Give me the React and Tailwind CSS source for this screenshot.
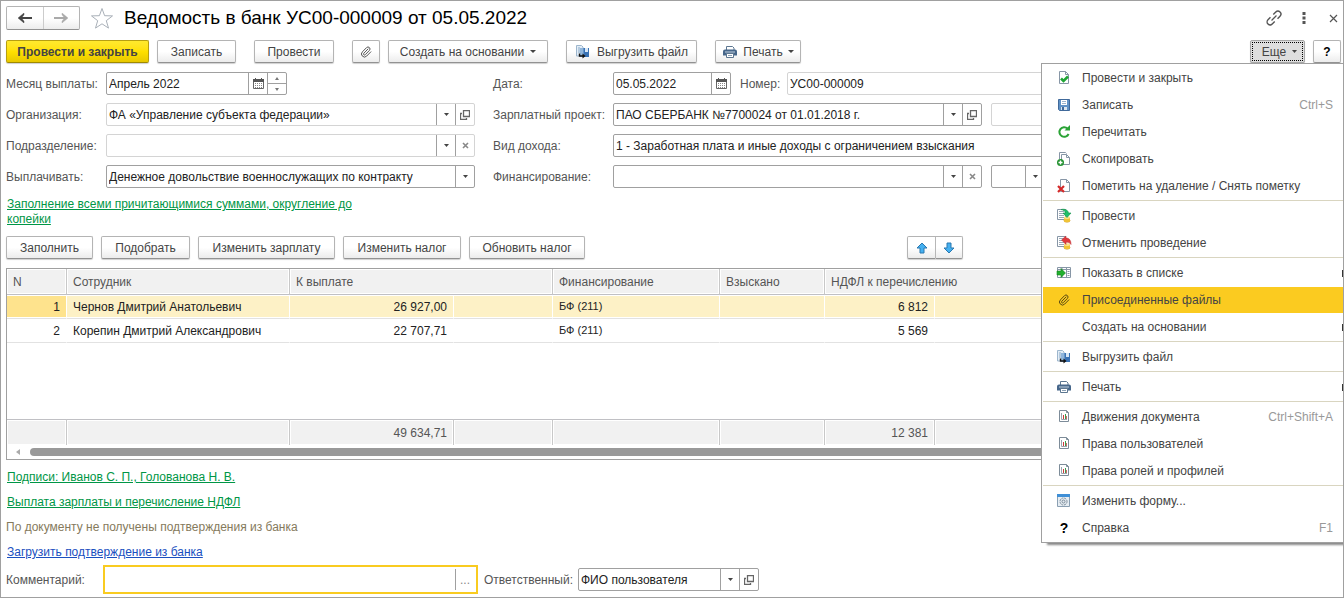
import React from "react";
import { Paperclip } from "lucide-react";

/* ---------- icons ---------- */

const Svg = ({ children, w = 16, h = 16, className = "" }) => (
  <svg width={w} height={h} viewBox={`0 0 ${w} ${h}`} fill="none" aria-hidden="true" className={`shrink-0 ${className}`}>
    {children}
  </svg>
);

const ArrowIcon = ({ right, color }) => (
  <Svg w={14} h={10}>
    <g transform={right ? "rotate(180 7 5)" : undefined}>
      <path d="M14 5H2" stroke={color} strokeWidth="2" />
      <path d="M6 0v1.800L3.500 5 6 8.200V10L0 5z" fill={color} stroke={color} strokeWidth=".4" />
    </g>
  </Svg>
);

const StarIcon = () => (
  <Svg w={24} h={22}>
    <path
      d="M12 1.500l2.600 7.200 7.900.2-6.200 4.800 2.200 7.400L12 16.800l-6.500 4.300 2.200-7.400L1.500 8.900l7.900-.2z"
      stroke="#a9b0b8"
      strokeWidth="1"
      strokeLinejoin="round"
    />
  </Svg>
);

const ClipIcon = ({ color = "#555" }) => (
  <span className="flex w-4 shrink-0 justify-center">
    <Paperclip size={12} color={color} strokeWidth={2} aria-hidden="true" />
  </span>
);

const Caret = ({ color = "#444" }) => (
  <Svg w={5} h={3}>
    <path d="M0 0h5L2.500 3z" fill={color} />
  </Svg>
);

const WideCaret = () => (
  <Svg w={6} h={3}>
    <path d="M0 0h6L3 3z" fill="#444" />
  </Svg>
);

const ExportIcon = () => (
  <Svg>
    <path d="M1.500 1.500h5l1.500 1.500v9h-6.500z" fill="#e3edf6" stroke="#9db6cd" />
    <path d="M3 4h2M3 6h2M3 8h2" stroke="#86a8c8" />
    <path d="M5 4h9v9H5z" fill="#3a72b4" />
    <path d="M5 4h3.500v9H5z" fill="#8fb5db" />
    <path d="M10 4h3v4h-3z" fill="#d9e8f6" />
    <path d="M4.500 9.500v2.500h4" stroke="#111" strokeWidth="1.400" />
    <path d="M7.500 9.500l3 2.500-3 2.500z" fill="#111" />
  </Svg>
);

const PrinterIcon = () => (
  <Svg>
    <path d="M4.500 6V2.500h6l1.500 1.500v2" fill="#fff" stroke="#5c7690" />
    <path d="M3 5.500h10a2 2 0 0 1 2 2v4H1v-4a2 2 0 0 1 2-2z" fill="#46668a" />
    <path d="M3 8h10" stroke="#c3d2e0" />
    <path d="M4.500 9.500h7v4h-7z" fill="#fff" stroke="#5c7690" />
    <path d="M6 11.500h4" stroke="#8ba0b5" />
  </Svg>
);

const CalendarIcon = () => (
  <Svg w={11} h={11}>
    <path d="M.5 1.500h10v9H.5z" fill="#fff" stroke="#666" />
    <path d="M0 1h11v3H0z" fill="#555" />
    <path d="M2.500 0v2M8.500 0v2" stroke="#555" />
    <path d="M2 5.500h7M2 7.500h7M2 9.500h7" stroke="#888" strokeDasharray="1 1" />
  </Svg>
);

const OpenIcon = () => (
  <Svg w={10} h={10}>
    <path d="M3.500.5h6v6h-6z" stroke="#666" strokeWidth="1.300" />
    <path d="M2 3.500H.5v6h6V8" stroke="#666" strokeWidth="1.300" />
  </Svg>
);

const ClearIcon = () => (
  <Svg w={7} h={7}>
    <path d="M1 1l5 5M6 1L1 6" stroke="#888" strokeWidth="1.600" />
  </Svg>
);

const MoveIcon = ({ down }) => (
  <Svg w={12} h={12}>
    <path
      d="M6 1l5 5H8v5H4V6H1z"
      transform={down ? "rotate(180 6 6)" : undefined}
      fill="#45b0f0"
      stroke="#2a78b0"
      strokeLinejoin="round"
    />
  </Svg>
);

const PostCloseIcon = () => (
  <Svg>
    <path d="M3.500 1.500h6l3 3v9h-9z" fill="#fff" stroke="#8796a6" />
    <path d="M9.500 1.500v3h3" stroke="#8796a6" />
    <path d="M5 8.500l2.500 2.500L12 6.500" stroke="#1fa534" strokeWidth="2.600" />
  </Svg>
);

const SaveIcon = () => (
  <Svg>
    <path d="M2.500 2.500h11v11h-10l-1-1z" fill="#5f92c6" stroke="#40699a" />
    <path d="M5 3h6v5H5z" fill="#fff" />
    <path d="M6 4.500h4M6 6.500h4" stroke="#9bb4cd" />
    <path d="M5 10h6v3H5z" fill="#dbe6f0" />
    <path d="M6 10h2v3H6z" fill="#40699a" />
  </Svg>
);

const ReloadIcon = () => (
  <Svg>
    <path d="M11.500 4.500A4.800 4.800 0 1 0 12.600 10" stroke="#2ba336" strokeWidth="2" />
    <path d="M8.500 6.500H14V1z" fill="#2ba336" />
  </Svg>
);

const CopyIcon = () => (
  <Svg>
    <path d="M3.500 8V1.500h6l1 1" fill="#fff" stroke="#8796a6" />
    <path d="M5.500 3.500h5l3 3v7h-8z" fill="#fff" stroke="#8796a6" />
    <path d="M10.500 3.500v3h3" stroke="#8796a6" />
    <circle cx="4.500" cy="11.500" r="3.500" fill="#22912f" />
    <path d="M4.500 9.500v4M2.500 11.500h4" stroke="#fff" strokeWidth="1.400" />
  </Svg>
);

const DeleteMarkIcon = () => (
  <Svg>
    <path d="M4.500 1.500h6l3 3v9h-9z" fill="#fff" stroke="#8796a6" />
    <path d="M10.500 1.500v3h3" stroke="#8796a6" />
    <path d="M2 8l6 6M8 8l-6 6" stroke="#d42a2a" strokeWidth="2.200" />
  </Svg>
);

const PostIcon = ({ undo }) => (
  <Svg>
    <path d="M1.500 1.500h8v10h-8z" fill="#fff" stroke="#8796a6" />
    <path d="M3 3.500h5M3 5.500h5M3 7.500h5M3 9.500h5" stroke="#9aa8b6" />
    <ellipse cx="11" cy="12.500" rx="3" ry="1.700" fill="#f0c437" stroke="#c9951b" strokeWidth=".6" />
    <path d="M8 9.500v3a3 1.500 0 0 0 6 0v-3z" fill="#f0c437" />
    <ellipse cx="11" cy="9.700" rx="3" ry="1.400" fill="#fbe28b" />
    {undo ? (
      <path d="M5.500 5L10 1v2c3 0 5 2 5 6.500-1.200-2-2.500-2.200-5-2.200V9.500z" fill="#e0393c" stroke="#b8282b" strokeWidth=".5" />
    ) : (
      <path d="M5 1.500c4-.8 7 .3 7.500 3.500H15l-4 4.500L7 5h2.500C9.300 3.200 7.500 2 5 1.500z" fill="#1fc069" stroke="#15904c" strokeWidth=".6" />
    )}
  </Svg>
);

const ShowInListIcon = () => (
  <Svg>
    <path d="M1.500 2.500h13v10h-13z" fill="#fff" stroke="#8796a6" />
    <path d="M2 4.500h12M6 3v9.500M10.500 3v9.500M11.500 6.500h2M11.500 8.500h2M11.500 10.500h2" stroke="#8796a6" />
    <path d="M1 6h4V3.500L9.500 8 5 12.500V10H1z" fill="#20b02c" stroke="#15801e" strokeWidth=".6" />
  </Svg>
);

const ReportIcon = () => (
  <Svg>
    <path d="M3.500 1.500h7l2 2v9h-9z" fill="#fff" stroke="#7d8c99" />
    <path d="M10.500 1.500v2h2" stroke="#7d8c99" />
    <path d="M5.500 4v6.500H11" stroke="#9aa5af" />
    <path d="M7.500 6v4" stroke="#cc3b3b" />
    <path d="M9.500 5v5" stroke="#3f9a4c" />
    <path d="M10.500 7v3" stroke="#cc6a6a" />
  </Svg>
);

const FormIcon = () => (
  <Svg>
    <path d="M1.500 1.500h12v12h-12z" fill="#e6edf3" stroke="#8a9fb2" />
    <path d="M1 1h13v3H1z" fill="#3f8fd6" />
    <circle cx="7.500" cy="8.500" r="3.500" stroke="#7b8b99" strokeDasharray="2 .8" />
    <circle cx="7.500" cy="8.500" r="1.500" stroke="#7b8b99" />
  </Svg>
);

const HelpIcon = () => <span className="w-4 text-center text-sm font-bold text-black">?</span>;

const LinkIcon = () => (
  <Svg w={18} h={18}>
    <g transform="rotate(-45 9 9)" stroke="#555" strokeWidth="1.400">
      <path d="M7 6H3.500a3 3 0 0 0 0 6H7" />
      <path d="M11 6h3.500a3 3 0 0 1 0 6H11" />
      <path d="M5.500 9h7" strokeWidth="1.200" />
    </g>
  </Svg>
);

/* ---------- controls ---------- */

const tones = {
  plain: "border-[#b4b4b4] border-b-[#929292] bg-linear-to-b from-white from-50% to-[#ececec] text-[#444]",
  primary: "border-[#b79f10] border-b-[#a08a00] bg-linear-to-b from-[#ffe92e] via-[#ffe000] to-[#e8c800] font-bold text-[#444]",
  pressed: "border-[#a8a8a8] bg-[#dedede] p-px text-[#444]",
};

const Btn = ({ children, tone = "plain", className = "", ...rest }) => (
  <button
    type="button"
    className={`flex h-[23px] shrink-0 items-center justify-center rounded-xs border text-xs whitespace-nowrap shadow-[0_1px_1px_#d0d0d0] ${tones[tone]} ${className}`}
    {...rest}
  >
    {children}
  </button>
);

const Seg = ({ label, children }) => (
  <button type="button" aria-label={label} className="flex w-[19px] shrink-0 items-center justify-center border-l border-[#a0a0a0]">
    {children}
  </button>
);

const Box = ({ children, light, className = "" }) => (
  <div className={`flex h-[23px] min-w-0 rounded-xs border bg-white ${light ? "border-[#d4d4d4]" : "border-[#a0a0a0]"} ${className}`}>
    {children}
  </div>
);

const TextBox = (props) => (
  <input type="text" className="w-0 min-w-0 flex-1 bg-transparent px-0.5 text-xs text-[#222] outline-none" {...props} />
);

const Dropdown = () => (
  <Seg label="Выбрать">
    <Caret />
  </Seg>
);
const Open = () => (
  <Seg label="Открыть">
    <OpenIcon />
  </Seg>
);
const Clear = () => (
  <Seg label="Очистить">
    <ClearIcon />
  </Seg>
);
const Calendar = () => (
  <Seg label="Календарь">
    <CalendarIcon />
  </Seg>
);

const LeftRow = ({ id, label, children }) => (
  <div className="flex h-[23px] items-center">
    <label htmlFor={id} className="w-[100px] shrink-0 whitespace-nowrap">{label}</label>
    {children}
  </div>
);
const RightRow = ({ id, label, children }) => (
  <div className="flex h-[23px] items-center">
    <label htmlFor={id} className="w-[120px] shrink-0 whitespace-nowrap">{label}</label>
    {children}
  </div>
);

/* ---------- menu ---------- */

const menu = [
  [
    { icon: <PostCloseIcon />, text: "Провести и закрыть" },
    { icon: <SaveIcon />, text: "Записать", key: "Ctrl+S" },
    { icon: <ReloadIcon />, text: "Перечитать" },
    { icon: <CopyIcon />, text: "Скопировать" },
    { icon: <DeleteMarkIcon />, text: "Пометить на удаление / Снять пометку" },
  ],
  [
    { icon: <PostIcon />, text: "Провести" },
    { icon: <PostIcon undo />, text: "Отменить проведение" },
  ],
  [
    { icon: <ShowInListIcon />, text: "Показать в списке", sub: true },
    { icon: <ClipIcon color="#5a4a14" />, text: "Присоединенные файлы", active: true },
    { text: "Создать на основании", sub: true },
  ],
  [{ icon: <ExportIcon />, text: "Выгрузить файл" }],
  [{ icon: <PrinterIcon />, text: "Печать", sub: true }],
  [
    { icon: <ReportIcon />, text: "Движения документа", key: "Ctrl+Shift+A" },
    { icon: <ReportIcon />, text: "Права пользователей" },
    { icon: <ReportIcon />, text: "Права ролей и профилей" },
  ],
  [
    { icon: <FormIcon />, text: "Изменить форму..." },
    { icon: <HelpIcon />, text: "Справка", key: "F1" },
  ],
];

const MoreMenu = () => (
  <div
    role="menu"
    aria-label="Еще"
    className="absolute top-full right-0 z-10 w-[302px] border border-r-0 border-[#a0a0a0] bg-white pt-px pl-px shadow-[5px_3px_2px_-1px_#888]"
  >
    {menu.map((group, i) => (
      <div key={i} className={i ? "border-t border-[#d9d5c0] pt-0.5" : ""}>
        {group.map((item) => (
          <button
            key={item.text}
            type="button"
            role="menuitem"
            className={`flex h-[27px] w-full items-center border-b border-white pl-[13px] text-left text-xs text-[#444] ${item.active ? "bg-[#fbcb20]" : ""}`}
          >
            <span className="flex w-[26px] shrink-0">{item.icon}</span>
            <span className="flex-1 whitespace-nowrap">{item.text}</span>
            {item.key && <span className="pr-[10px] text-[#999]">{item.key}</span>}
            {item.sub && <span className="h-[7px] w-px bg-[#333]" />}
          </button>
        ))}
      </div>
    ))}
  </div>
);

/* ---------- table ---------- */

const rows = [
  { n: 1, name: "Чернов Дмитрий Анатольевич", pay: "26 927,00", fin: "БФ (211)", tax: "6 812" },
  { n: 2, name: "Корепин Дмитрий Александрович", pay: "22 707,71", fin: "БФ (211)", tax: "5 569" },
];

const headCell = "h-[26px] border-r border-b border-r-[#c8c8c8] border-b-[#c0c0c4] bg-[#f1f1f1] px-1.5 text-left font-normal whitespace-nowrap text-[#555] shadow-[inset_0_0_0_1px_#fff] last:border-r-0";
const footCell = "h-[26px] border-t border-r border-t-[#c0c0c4] border-r-[#c8c8c8] bg-[#f1f1f1] px-1.5 text-right text-[#555] shadow-[inset_0_0_0_1px_#fff] last:border-r-0";
const cell = "h-6 border-r border-b border-b-[#e2e2e2] border-r-white px-1.5 whitespace-nowrap text-[#222] shadow-[inset_0_1px_0_#fff,inset_0_-1px_0_#fff]";

const EmployeesTable = () => (
  <div className="border border-[#a0a0a0]">
    <table className="w-full table-fixed border-separate border-spacing-0 text-xs">
      <colgroup>
        <col className="w-[60px]" />
        <col className="w-[223px]" />
        <col className="w-[164px]" />
        <col className="w-[99px]" />
        <col className="w-[167px]" />
        <col className="w-[105px]" />
        <col className="w-[110px]" />
        <col />
      </colgroup>
      <thead>
        <tr>
          <th className={headCell}>N</th>
          <th className={headCell}>Сотрудник</th>
          <th colSpan={2} className={headCell}>К выплате</th>
          <th className={headCell}>Финансирование</th>
          <th className={headCell}>Взыскано</th>
          <th colSpan={2} className={headCell}>НДФЛ к перечислению</th>
        </tr>
      </thead>
      <tbody>
        {rows.map((r, i) => {
          const bg = i === 0 ? "bg-[#fdf1c6]" : "bg-white";
          return (
            <tr key={r.n} className={bg}>
              <td className={`${cell} text-right ${i === 0 ? "bg-[#fee38d]" : ""}`}>{r.n}</td>
              <td className={cell}>{r.name}</td>
              <td className={`${cell} text-right`}>{r.pay}</td>
              <td className={cell} />
              <td className={`${cell} text-[11px]`}>{r.fin}</td>
              <td className={cell} />
              <td className={`${cell} text-right`}>{r.tax}</td>
              <td className={cell} />
            </tr>
          );
        })}
        <tr>
          <td colSpan={8} className="h-[76px]" />
        </tr>
      </tbody>
      <tfoot>
        <tr>
          <td className={footCell} />
          <td className={footCell} />
          <td className={footCell}>49 634,71</td>
          <td className={footCell} />
          <td className={footCell} />
          <td className={footCell} />
          <td className={footCell}>12 381</td>
          <td className={footCell} />
        </tr>
      </tfoot>
    </table>
    <div className="flex h-3.5 items-center gap-2.5 pl-[9px]">
      <Svg w={4} h={6}>
        <path d="M4 0v6L0 3z" fill="#aaa" />
      </Svg>
      <div className="h-2 flex-1 rounded-full bg-[#999]" />
    </div>
  </div>
);

/* ---------- page ---------- */

export default function App() {
  return (
    <div className="overflow-hidden border border-[#a0a0a0] bg-white pb-[3px] font-['Liberation_Sans',Arial,sans-serif] text-xs text-[#555]">
      <header className="flex items-center pt-[5px] pr-[5px] pl-[5px]">
        <div className="flex h-6 w-[74px] rounded-xs border border-[#b4b4b4] border-b-[#929292] bg-linear-to-b from-white from-50% to-[#ececec]">
          <button type="button" aria-label="Назад" className="flex flex-1 items-center justify-center">
            <ArrowIcon color="#444" />
          </button>
          <button type="button" aria-label="Вперед" className="flex flex-1 items-center justify-center border-l border-[#ccc]">
            <ArrowIcon right color="#aaa" />
          </button>
        </div>
        <button type="button" aria-label="В избранное" className="ml-[10px]">
          <StarIcon />
        </button>
        <h1 className="ml-2.5 text-[19px] leading-6 whitespace-nowrap text-black">Ведомость в банк УС00-000009 от 05.05.2022</h1>
        <div className="ml-auto flex items-center">
          <button type="button" aria-label="Ссылка" className="mr-[19px]">
            <LinkIcon />
          </button>
          <button type="button" aria-label="Меню" className="mr-[23px]">
            <Svg w={4} h={12}>
              <path d="M.5 0h3v3h-3zM.5 4.500h3v3h-3zM.5 9h3v3h-3z" fill="#555" />
            </Svg>
          </button>
          <button type="button" aria-label="Закрыть">
            <Svg w={9} h={9}>
              <path d="M1 1l7 7M8 1L1 8" stroke="#555" strokeWidth="1.200" />
            </Svg>
          </button>
        </div>
      </header>

      <div className="relative mt-[10px] flex items-center pr-0.5 pl-[5px]">
        <Btn tone="primary" className="w-[143px]">Провести и закрыть</Btn>
        <Btn className="ml-2 w-[79px]">Записать</Btn>
        <Btn className="ml-[18px] w-20">Провести</Btn>
        <Btn className="ml-[18px] w-7" aria-label="Присоединенные файлы">
          <ClipIcon />
        </Btn>
        <Btn className="ml-2 w-40 gap-1.5">
          Создать на основании <WideCaret />
        </Btn>
        <Btn className="ml-[18px] w-[131px] gap-1.5">
          <ExportIcon /> Выгрузить файл
        </Btn>
        <Btn className="ml-[18px] w-[86px] gap-[5px]">
          <PrinterIcon /> Печать <WideCaret />
        </Btn>
        <Btn tone="pressed" className="ml-auto w-[55px]" aria-haspopup="menu" aria-expanded="true">
          <span className="flex h-full w-full items-center justify-center gap-1.5 border border-dotted border-black pl-1">
            Еще <Caret />
          </span>
        </Btn>
        <Btn className="ml-2 w-7 text-sm font-bold text-black" aria-label="Справка">?</Btn>
        <MoreMenu />
      </div>

      <main className="px-[5px]">
        <div className="mt-[9px] flex">
          <div className="flex w-[469px] shrink-0 flex-col gap-2">
            <LeftRow id="month" label="Месяц выплаты:">
              <Box className="w-[181px]">
                <TextBox id="month" defaultValue="Апрель 2022" />
                <Calendar />
                <div className="flex w-[19px] flex-col border-l border-[#a0a0a0]">
                  <button type="button" aria-label="Больше" className="flex flex-1 items-center justify-center border-b border-[#a0a0a0]">
                    <Svg w={4} h={3}><path d="M0 3h4L2 0z" fill="#777" /></Svg>
                  </button>
                  <button type="button" aria-label="Меньше" className="flex flex-1 items-center justify-center">
                    <Svg w={4} h={3}><path d="M0 0h4L2 3z" fill="#777" /></Svg>
                  </button>
                </div>
              </Box>
            </LeftRow>
            <LeftRow id="org" label="Организация:">
              <Box light className="flex-1">
                <TextBox id="org" defaultValue="ФА «Управление субъекта федерации»" />
                <Dropdown />
                <Open />
              </Box>
            </LeftRow>
            <LeftRow id="dept" label="Подразделение:">
              <Box light className="flex-1">
                <TextBox id="dept" />
                <Dropdown />
                <Clear />
              </Box>
            </LeftRow>
            <LeftRow id="pay" label="Выплачивать:">
              <Box className="flex-1">
                <select id="pay" className="min-w-0 flex-1 appearance-none bg-transparent px-0.5 text-xs text-[#222] outline-none">
                  <option>Денежное довольствие военнослужащих по контракту</option>
                </select>
                <Dropdown />
              </Box>
            </LeftRow>
          </div>

          <div className="ml-[18px] flex min-w-0 flex-1 flex-col gap-2">
            <RightRow id="date" label="Дата:">
              <Box className="w-[118px]">
                <TextBox id="date" defaultValue="05.05.2022" />
                <Calendar />
              </Box>
              <label htmlFor="number" className="ml-[9px] w-[47px] shrink-0">Номер:</label>
              <Box light className="flex-1">
                <TextBox id="number" defaultValue="УС00-000009" />
              </Box>
            </RightRow>
            <RightRow id="project" label="Зарплатный проект:">
              <Box className="w-[369px]">
                <TextBox id="project" defaultValue="ПАО СБЕРБАНК №7700024 от 01.01.2018 г." />
                <Dropdown />
                <Open />
              </Box>
              <Box light className="ml-[9px] flex-1">
                <TextBox aria-label="Номер договора" />
              </Box>
            </RightRow>
            <RightRow id="income" label="Вид дохода:">
              <Box className="flex-1">
                <select id="income" className="min-w-0 flex-1 appearance-none bg-transparent px-0.5 text-xs text-[#222] outline-none">
                  <option>1 - Заработная плата и иные доходы с ограничением взыскания</option>
                </select>
                <Dropdown />
              </Box>
            </RightRow>
            <RightRow id="finance" label="Финансирование:">
              <Box className="w-[369px]">
                <TextBox id="finance" />
                <Dropdown />
                <Clear />
              </Box>
              <Box className="ml-[9px] w-[54px]">
                <TextBox aria-label="Статья" />
                <Dropdown />
              </Box>
            </RightRow>
          </div>
        </div>

        <a href="#fill" className="mt-[9px] ml-px block w-[360px] leading-[15px] text-[#009646] underline">
          Заполнение всеми причитающимися суммами, округление до копейки
        </a>

        <div className="mt-[9px] flex">
          <Btn className="w-[87px]">Заполнить</Btn>
          <Btn className="ml-2 w-[89px]">Подобрать</Btn>
          <Btn className="ml-2 w-[137px]">Изменить зарплату</Btn>
          <Btn className="ml-2 w-[118px]">Изменить налог</Btn>
          <Btn className="ml-2 w-[116px]">Обновить налог</Btn>
          <Btn className="ml-[322px] w-[29px] rounded-r-none" aria-label="Вверх">
            <MoveIcon />
          </Btn>
          <Btn className="w-[27px] rounded-l-none border-l-0" aria-label="Вниз">
            <MoveIcon down />
          </Btn>
        </div>

        <div className="mt-[9px]">
          <EmployeesTable />
        </div>

        <div className="mt-[5px] leading-[25px]">
          <div className="pl-px"><a href="#signs" className="text-[#009646] underline">Подписи: Иванов С. П., Голованова Н. В.</a></div>
          <div className="pl-px"><a href="#tax" className="text-[#009646] underline">Выплата зарплаты и перечисление НДФЛ</a></div>
          <p className="text-[#857a5c]">По документу не получены подтверждения из банка</p>
          <div className="pl-px"><a href="#load" className="text-[#1a4fc0] underline">Загрузить подтверждение из банка</a></div>
        </div>

        <div className="flex items-center">
          <label htmlFor="comment" className="w-[97px] shrink-0">Комментарий:</label>
          <div className="flex h-[29px] w-[375px] border-2 border-[#f9cb20] p-0.5">
            <TextBox id="comment" />
            <button type="button" aria-label="Открыть комментарий" className="w-[19px] border-l border-[#a0a0a0] text-[#888]">...</button>
          </div>
          <label htmlFor="owner" className="ml-1.5 w-[94px] shrink-0 whitespace-nowrap">Ответственный:</label>
          <Box className="w-[181px]">
            <TextBox id="owner" defaultValue="ФИО пользователя" />
            <Dropdown />
            <Open />
          </Box>
        </div>
      </main>
    </div>
  );
}
